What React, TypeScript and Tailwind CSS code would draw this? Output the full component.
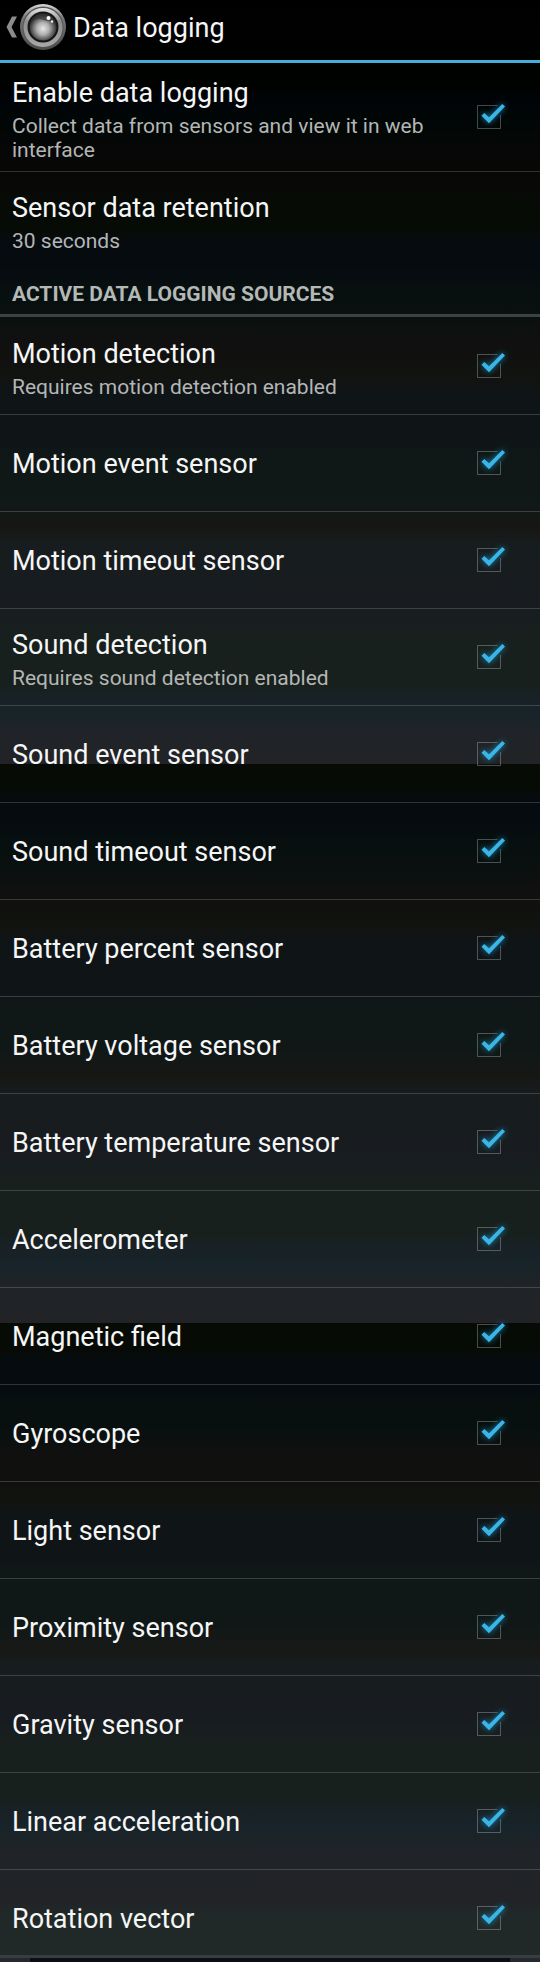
import { useId, useState } from 'react';

type Preference = { title: string; summary?: string };

const sources: Preference[] = [
  { title: 'Motion detection', summary: 'Requires motion detection enabled' },
  { title: 'Motion event sensor' },
  { title: 'Motion timeout sensor' },
  { title: 'Sound detection', summary: 'Requires sound detection enabled' },
  { title: 'Sound event sensor' },
  { title: 'Sound timeout sensor' },
  { title: 'Battery percent sensor' },
  { title: 'Battery voltage sensor' },
  { title: 'Battery temperature sensor' },
  { title: 'Accelerometer' },
  { title: 'Magnetic field' },
  { title: 'Gyroscope' },
  { title: 'Light sensor' },
  { title: 'Proximity sensor' },
  { title: 'Gravity sensor' },
  { title: 'Linear acceleration' },
  { title: 'Rotation vector' },
];

function LensIcon() {
  return (
    <svg className="size-12 shrink-0" viewBox="0 0 48 48" aria-hidden="true">
      <defs>
        <linearGradient id="rim" x1="0" y1="0" x2="0" y2="1">
          <stop offset="0" stopColor="#d8d8d8" />
          <stop offset="0.3" stopColor="#777777" />
          <stop offset="1" stopColor="#4c4c4c" />
        </linearGradient>
        <linearGradient id="ring" x1="0" y1="0" x2="0" y2="1">
          <stop offset="0" stopColor="#e6e6e6" />
          <stop offset="0.35" stopColor="#8e8e8e" />
          <stop offset="1" stopColor="#a8a8a8" />
        </linearGradient>
        <radialGradient id="glass" cx="0.5" cy="0.56" r="0.5">
          <stop offset="0" stopColor="#e8e8e8" />
          <stop offset="0.45" stopColor="#b0b0b0" />
          <stop offset="0.8" stopColor="#606060" />
          <stop offset="1" stopColor="#303030" />
        </radialGradient>
      </defs>
      <circle cx="24" cy="24" r="23" fill="url(#rim)" />
      <circle cx="24" cy="24" r="20.5" fill="#555555" />
      <circle cx="24" cy="24.5" r="19.5" fill="url(#ring)" />
      <circle cx="24" cy="24" r="15.5" fill="#161616" />
      <circle cx="24" cy="24" r="13.5" fill="url(#glass)" />
      <path d="M12 20a13 13 0 0 1 24 0c-5-3-8-1-12-3s-8-1-12 3z" fill="#333333" opacity="0.6" />
      <circle cx="29.5" cy="15" r="2" fill="#ffffff" />
      <circle cx="33" cy="18.5" r="1.2" fill="#eeeeee" />
    </svg>
  );
}

function CheckBox({ id }: { id: string }) {
  const [checked, setChecked] = useState(true);
  return (
    <span className="relative mr-[27px] block size-6 shrink-0">
      <input
        id={id}
        type="checkbox"
        checked={checked}
        onChange={(e) => setChecked(e.target.checked)}
        className="peer block size-6 cursor-pointer appearance-none border border-white/25 checked:border-transparent"
      />
      <svg
        className="pointer-events-none absolute inset-0 hidden size-6 overflow-visible peer-checked:block"
        viewBox="0 0 24 24"
        fill="none"
        aria-hidden="true"
      >
        <path d="M20.5 0.5H0.5V23.5H23.5V10" stroke="#ffffff" strokeOpacity="0.27" />
        <path
          d="M4.5 10.7L12 18.2L28 1.5L25.3 -1L12 12.3L7.3 8z"
          fill="#3ab5e5"
          className="drop-shadow-[0_0_3px_#1689b8]"
        />
      </svg>
    </span>
  );
}

function PreferenceText({ title, summary }: Preference) {
  return (
    <span className="flex min-w-0 flex-1 flex-col gap-[3px] pt-0.5">
      <span className="text-[27px] leading-9 text-[#f6f6f6]">{title}</span>
      {summary && <span className="text-[21px] leading-6 text-[#b4b6b5]">{summary}</span>}
    </span>
  );
}

function CheckPreference({ title, summary }: Preference) {
  const id = useId();
  return (
    <label htmlFor={id} className="flex flex-1 cursor-pointer items-center gap-9">
      <PreferenceText title={title} summary={summary} />
      <CheckBox id={id} />
    </label>
  );
}

export default function App() {
  return (
    <div className="flex min-h-screen flex-col bg-[#212928] bg-[linear-gradient(to_bottom,#000000_0px,#000200_62px,#000200_85px,#000407_100px,#020706_130px,#070707_150px,#080807_180px,#070b06_205px,#070b06_230px,#060b10_242px,#060b10_265px,#07100f_295px,#0a100f_318px,#101010_340px,#11130f_375px,#0f1417_395px,#0f1417_430px,#101817_465px,#101817_500px,#161714_525px,#171c1e_545px,#181c20_605px,#18201e_635px,#18201e_685px,#182126_697px,#172429_714px,#202327_730px,#212327_764px,#070b06_764px,#070b06_790px,#060b10_800px,#060b10_820px,#07100f_848px,#0a100f_868px,#101010_890px,#11130f_925px,#0f1417_945px,#0f1417_980px,#101817_1015px,#101817_1050px,#161714_1075px,#171c1e_1095px,#181c20_1155px,#18201e_1185px,#18201e_1235px,#182126_1247px,#172429_1266px,#202327_1285px,#212327_1323px,#070b06_1323px,#070b06_1350px,#060b10_1362px,#060b10_1385px,#07100f_1405px,#07100f_1425px,#101010_1452px,#11130f_1500px,#0f1417_1515px,#0f1417_1555px,#101817_1575px,#101817_1625px,#181916_1653px,#171c1e_1662px,#181c20_1720px,#18201e_1745px,#18201e_1800px,#182126_1812px,#172429_1828px,#202327_1848px,#212327_1900px,#212928_1915px,#212928_1955px)] font-['Roboto',sans-serif]">
      <header className="flex h-[63px] items-center border-b-[3px] border-[#41aedb] pb-[6px]">
        <a href="#back" aria-label="Navigate up" className="flex items-center pl-[6px]">
          <svg className="h-6 w-3 shrink-0" viewBox="0 0 12 24" aria-hidden="true">
            <path d="M6 1.5H11L5.5 12L11 22.5H6L0.5 12z" fill="#8c8c8c" />
          </svg>
          <span className="flex pl-px">
            <LensIcon />
          </span>
        </a>
        <h1 className="pt-0.5 pl-[6px] text-[27px] leading-8 text-[#f6f6f6]">Data logging</h1>
      </header>

      <main>
        <div className="flex min-h-[109px] border-b border-white/17 px-3">
          <CheckPreference
            title="Enable data logging"
            summary="Collect data from sensors and view it in web interface"
          />
        </div>
        <button type="button" className="flex min-h-[96px] w-full cursor-pointer items-center px-3 text-left">
          <PreferenceText title="Sensor data retention" summary="30 seconds" />
        </button>

        <section>
          <h2 className="border-b-[3px] border-[#3b4241] px-3 pt-[14px] pb-2 text-[21px] leading-6 font-bold text-[#b4b8b6] uppercase">
            Active data logging sources
          </h2>
          <ul className="pt-px">
            {sources.map((source) => (
              <li
                key={source.title}
                className="flex min-h-[97px] border-b border-white/17 px-3 last:min-h-[85px] last:border-b-0 last:pt-[11px]"
              >
                <CheckPreference {...source} />
              </li>
            ))}
          </ul>
        </section>
      </main>

      <footer className="border-t-[3px] border-[#393d41] bg-[#24292d] px-[30px]">
        <div className="h-1 bg-[#0a0e14]" />
      </footer>
    </div>
  );
}
